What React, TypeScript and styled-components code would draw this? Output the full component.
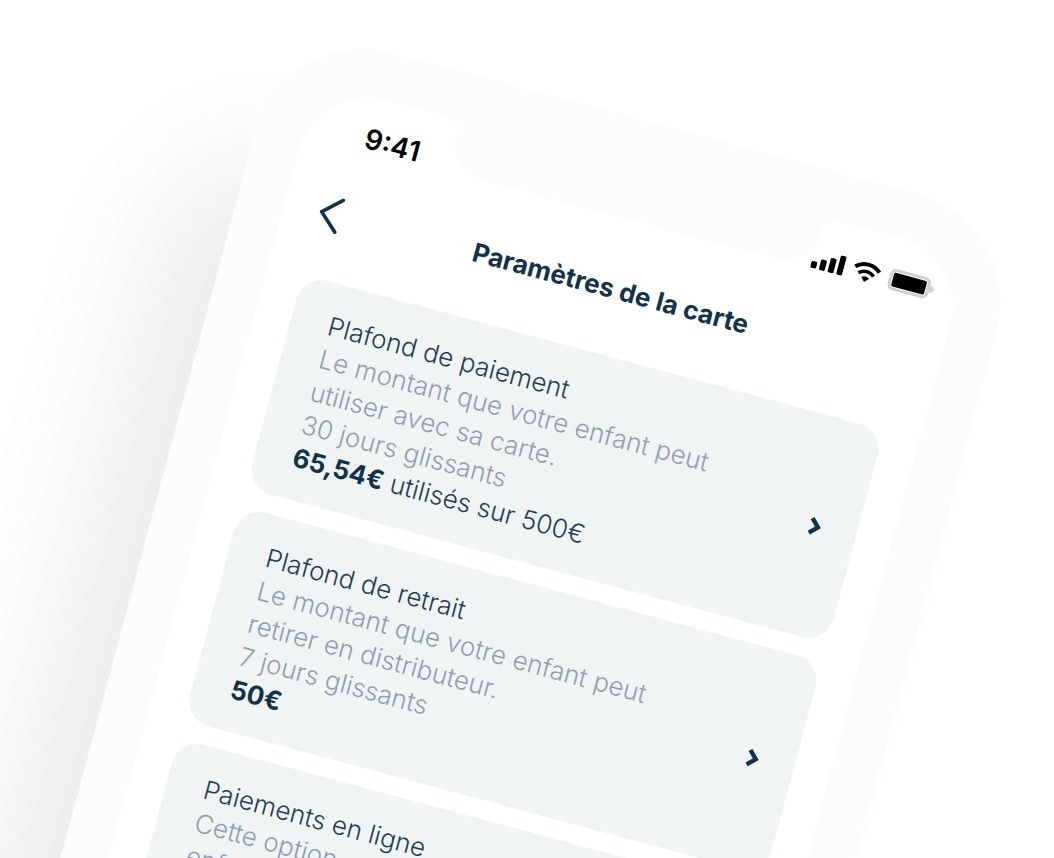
import React from "react";
import styled, { createGlobalStyle } from "styled-components";

const colors = {
  ink: "#12324a",
  inkLight: "#1f3e54",
  muted: "#929eb1",
  card: "#f0f4f5",
  bezel: "#fbfdfc",
  white: "#ffffff",
};

const BEZEL = 47;

const GlobalStyle = createGlobalStyle`
  * { box-sizing: border-box; }
  body {
    margin: 0;
    background: ${colors.white};
    font-family: Inter, "Liberation Sans", sans-serif;
    color: ${colors.ink};
  }
`;

const Stage = styled.main`
  height: 100vh;
  overflow: hidden;
  padding: 24px 0 0 calc(50% - 243px);
`;

const Phone = styled.div`
  width: 768px;
  min-height: 1560px;
  padding: ${BEZEL}px;
  display: flex;
  border-radius: 112px;
  background: ${colors.bezel};
  box-shadow: -78px 124px 110px rgba(0, 0, 0, 0.07);
  transform: rotate(15deg);
  transform-origin: 0 0;
`;

const Screen = styled.div`
  position: relative;
  flex: 1;
  border-radius: 70px;
  background: ${colors.white};
`;

const Notch = styled.svg`
  position: absolute;
  top: -1px;
  left: 50%;
  margin-left: -202px;
  display: block;
`;

const StatusBar = styled.div`
  display: flex;
  align-items: center;
  justify-content: space-between;
  height: 84px;
  padding: 0 24px 0 61px;
`;

const Clock = styled.time`
  font-size: 28px;
  line-height: 32px;
  font-weight: 600;
  color: #000;
`;

const StatusIcons = styled.div`
  display: flex;
  align-items: center;
  gap: 9px;
`;

const TopBar = styled.header`
  display: grid;
  grid-template-columns: 40px 1fr 40px;
  align-items: center;
  height: 80px;
  padding: 0 36px;
`;

const BackButton = styled.button`
  display: flex;
  padding: 0;
  border: 0;
  background: none;
  color: ${colors.ink};
  cursor: pointer;
`;

const Title = styled.h1`
  margin: 0;
  font-size: 26px;
  line-height: 34px;
  font-weight: 700;
  text-align: center;
  white-space: nowrap;
`;

const CardList = styled.div`
  display: flex;
  flex-direction: column;
  gap: 19px;
  padding: 26px 36px;
`;

const Card = styled.button`
  display: flex;
  align-items: center;
  justify-content: space-between;
  min-height: 221px;
  padding: 26px 36px 25px 38px;
  border: 0;
  border-radius: 26px;
  background: ${colors.card};
  color: ${colors.ink};
  font: inherit;
  text-align: left;
  cursor: pointer;
`;

const CardText = styled.span`
  display: flex;
  flex-direction: column;
  align-self: flex-start;
  font-size: 26px;
  line-height: 34px;
  font-weight: 300;
  white-space: nowrap;
`;

const Line = styled.span<{ $muted?: boolean }>`
  color: ${(p) => (p.$muted ? colors.muted : colors.inkLight)};
`;

const Amount = styled.strong`
  font-weight: 700;
  color: ${colors.ink};
`;

type Setting = {
  title: string;
  description: string[];
  amount?: string;
  usage?: string;
};

const settings: Setting[] = [
  {
    title: "Plafond de paiement",
    description: [
      "Le montant que votre enfant peut",
      "utiliser avec sa carte.",
      "30 jours glissants",
    ],
    amount: "65,54€",
    usage: " utilisés sur 500€",
  },
  {
    title: "Plafond de retrait",
    description: [
      "Le montant que votre enfant peut",
      "retirer en distributeur.",
      "7 jours glissants",
    ],
    amount: "50€",
  },
  {
    title: "Paiements en ligne",
    description: ["Cette option", "enfant"],
  },
];

const SignalIcon = () => (
  <svg width="33" height="20" viewBox="0 0 33 20" fill="#000" aria-hidden="true">
    <rect x="0" y="13" width="6" height="7" rx="1.5" />
    <rect x="9" y="9" width="6" height="11" rx="1.5" />
    <rect x="18" y="5" width="6" height="15" rx="1.5" />
    <rect x="27" y="0" width="6" height="20" rx="1.5" />
  </svg>
);

const WifiIcon = () => (
  <svg width="28" height="20" viewBox="0 0 28 20" fill="none" aria-hidden="true">
    <path d="M1.500 7.200C8.500.4 19.500.4 26.500 7.200" stroke="#000" strokeWidth="4" />
    <path d="M6.200 12.500C10.600 8.300 17.400 8.300 21.800 12.500" stroke="#000" strokeWidth="3.600" />
    <path d="M14 20l-4-4.200c2.300-2 5.700-2 8 0z" fill="#000" />
  </svg>
);

const BatteryIcon = () => (
  <svg width="47" height="22" viewBox="0 0 47 22" aria-hidden="true">
    <rect x="1.500" y="1.500" width="39" height="19" rx="4.500" fill="#fff" stroke="#d0d0d3" strokeWidth="3" />
    <rect x="4" y="4" width="34" height="14" rx="1.500" fill="#000" />
    <path d="M42 7c3 .8 4.500 2.200 4.500 4s-1.500 3.200-4.500 4z" fill="#d0d0d3" />
  </svg>
);

const BackIcon = () => (
  <svg width="22" height="37" viewBox="0 0 22 37" fill="none" aria-hidden="true">
    <path
      d="M20 2L2 18.500L20 35"
      stroke="currentColor"
      strokeWidth="3.600"
      strokeLinecap="round"
      strokeLinejoin="miter"
    />
  </svg>
);

const ChevronIcon = () => (
  <svg width="13" height="20" viewBox="0 0 13 20" fill="none" aria-hidden="true">
    <path d="M2.500 2.500L10 10L2.500 17.500" stroke="currentColor" strokeWidth="4.400" />
  </svg>
);

export default function App() {
  return (
    <>
      <GlobalStyle />
      <Stage>
        <Phone>
          <Screen>
            <Notch width="404" height="54" viewBox="0 0 404 54" aria-hidden="true">
              <path
                d="M0 0H404V1C396 1 392 6 392 13C392 37 374 54 348 54H56C30 54 12 37 12 13C12 6 8 1 0 1Z"
                fill={colors.bezel}
              />
            </Notch>
            <StatusBar>
              <Clock>9:41</Clock>
              <StatusIcons>
                <SignalIcon />
                <WifiIcon />
                <BatteryIcon />
              </StatusIcons>
            </StatusBar>
            <TopBar>
              <BackButton aria-label="Retour">
                <BackIcon />
              </BackButton>
              <Title>Paramètres de la carte</Title>
            </TopBar>
            <CardList>
              {settings.map((s) => (
                <Card key={s.title}>
                  <CardText>
                    <Line>{s.title}</Line>
                    {s.description.map((text) => (
                      <Line $muted key={text}>
                        {text}
                      </Line>
                    ))}
                    {s.amount && (
                      <Line>
                        <Amount>{s.amount}</Amount>
                        {s.usage}
                      </Line>
                    )}
                  </CardText>
                  <ChevronIcon />
                </Card>
              ))}
            </CardList>
          </Screen>
        </Phone>
      </Stage>
    </>
  );
}
